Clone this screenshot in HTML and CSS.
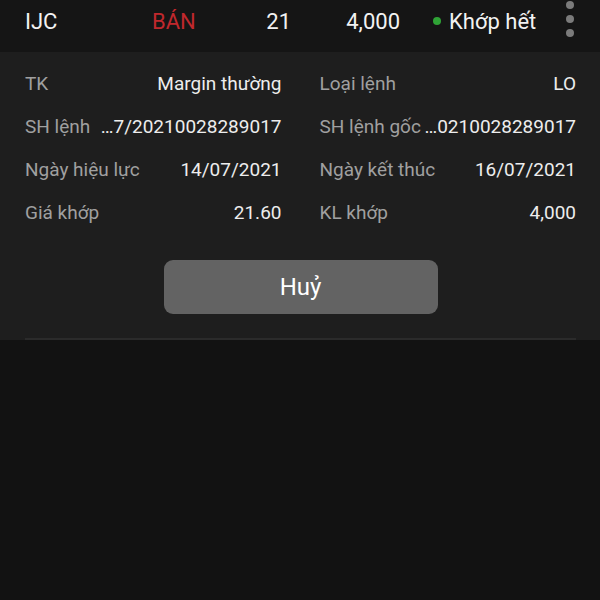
FILE: index.html
```html
<!DOCTYPE html>
<html lang="vi">

<head>
    <meta charset="UTF-8">
    <meta name="viewport" content="width=device-width, initial-scale=1.0">
    <title>Chi tiết lệnh</title>
    <link rel="stylesheet" href="styles.css">
</head>

<body>
    <div class="order">
        <div class="order-row">
            <span class="code">IJC</span>
            <span class="side side-sell">BÁN</span>
            <span class="num">21</span>
            <span class="num">4,000</span>
            <span class="status"><i class="dot"></i>Khớp hết</span>
            <span class="menu"><i></i><i></i><i></i></span>
        </div>
        <div class="order-detail">
            <div class="grid">
                <div class="item"><span class="label">TK</span><span class="value">Margin thường</span></div>
                <div class="item"><span class="label">Loại lệnh</span><span class="value">LO</span></div>
                <div class="item"><span class="label">SH lệnh</span><span class="value">…7/20210028289017</span></div>
                <div class="item"><span class="label">SH lệnh gốc</span><span class="value">…0210028289017</span></div>
                <div class="item"><span class="label">Ngày hiệu lực</span><span class="value">14/07/2021</span></div>
                <div class="item"><span class="label">Ngày kết thúc</span><span class="value">16/07/2021</span></div>
                <div class="item"><span class="label">Giá khớp</span><span class="value">21.60</span></div>
                <div class="item"><span class="label">KL khớp</span><span class="value">4,000</span></div>
            </div>
            <div class="actions">
                <button class="btn-cancel">Huỷ</button>
            </div>
            <div class="divider"></div>
        </div>
    </div>
</body>

</html>
```

FILE: styles.css
```css
body {
    margin: 0;
    background-color: #121212;
    font-family: Roboto, "Noto Sans", sans-serif;
    color: #ececec;
}

.order-row {
    display: grid;
    grid-template-columns: 127px 78px 61px 109px 1fr 20px;
    align-items: center;
    height: 52px;
    box-sizing: border-box;
    padding: 0 20px 10px 25px;
    background-color: #151515;
    font-size: 22px;
    color: #f2f2f2;
}

.order-row .side-sell {
    color: #c0282d;
}

.order-row .num {
    text-align: right;
}

.order-row .status {
    display: flex;
    align-items: center;
    padding-left: 33px;
}

.order-row .dot {
    width: 8px;
    height: 8px;
    margin-right: 8px;
    border-radius: 50%;
    background-color: #2fa336;
}

.order-row .menu {
    display: flex;
    flex-direction: column;
    align-items: center;
    gap: 6px;
    align-self: start;
    margin-top: 1px;
}

.order-row .menu i {
    width: 8px;
    height: 8px;
    border-radius: 50%;
    background-color: #7b7b7b;
}

.order-detail {
    background-color: #1e1e1e;
    padding: 10px 24px 0 25px;
}

.order-detail .grid {
    display: grid;
    grid-template-columns: 1fr 1fr;
    column-gap: 38px;
}

.order-detail .item {
    display: flex;
    justify-content: space-between;
    align-items: center;
    height: 43px;
    font-size: 19px;
    white-space: nowrap;
}

.order-detail .label {
    color: #a0a0a0;
}

.order-detail .value {
    color: #ededed;
}

.order-detail .actions {
    display: flex;
    justify-content: center;
    padding: 26px 0 24px;
}

.btn-cancel {
    width: 274px;
    height: 54px;
    border: none;
    border-radius: 9px;
    background-color: #636363;
    color: #ffffff;
    font-family: Roboto, sans-serif;
    font-size: 24px;
}

.order-detail .divider {
    height: 2px;
    background-color: #2b2b2b;
}
```
